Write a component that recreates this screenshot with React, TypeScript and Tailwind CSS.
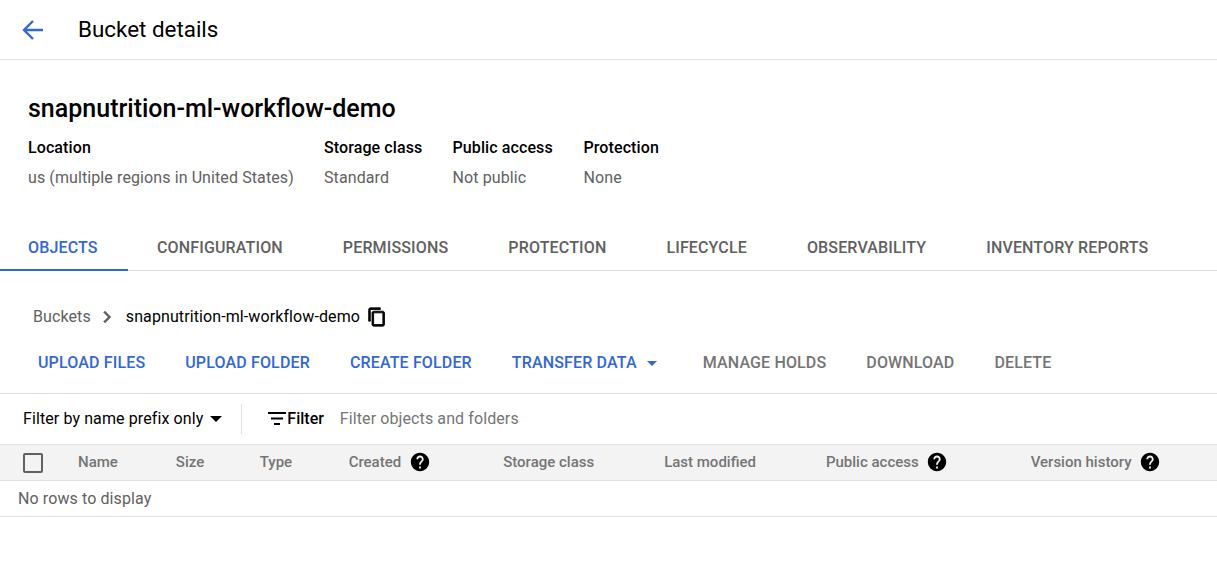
const tabs = ['CONFIGURATION', 'PERMISSIONS', 'PROTECTION', 'LIFECYCLE', 'OBSERVABILITY', 'INVENTORY REPORTS'];

function Help() {
  return (
    <svg width="22" height="22" viewBox="0 0 24 24" className="block shrink-0">
      <path fill="#000" d="M12 2C6.48 2 2 6.48 2 12s4.48 10 10 10 10-4.48 10-10S17.52 2 12 2zm1 17h-2v-2h2v2zm2.07-7.75l-.9.92C13.45 12.9 13 13.5 13 15h-2v-.5c0-1.1.45-2.1 1.17-2.83l1.24-1.26c.37-.36.59-.86.59-1.41 0-1.1-.9-2-2-2s-2 .9-2 2H8c0-2.21 1.79-4 4-4s4 1.79 4 4c0 .88-.36 1.68-.93 2.25z" />
    </svg>
  );
}

function Meta({ label, value, className }: { label: string; value: string; className: string }) {
  return (
    <div className={className}>
      <div className="text-black font-medium">{label}</div>
      <div className="mt-[10px] text-[#616161]">{value}</div>
    </div>
  );
}

export default function App() {
  return (
    <div className="w-[1217px] h-[582px] overflow-hidden bg-white text-[16px] leading-[20px] tracking-[0.1px] font-['Roboto',sans-serif]">
      <header className="h-[60px] flex items-center border-b border-[#e0e0e0]">
        <svg width="22" height="22" viewBox="0 0 22 22" className="ml-[22px]">
          <path d="M21 11H2.5M11 2l-9 9 9 9" fill="none" stroke="#3367d6" strokeWidth="2.4" />
        </svg>
        <h1 className="ml-[34px] pb-[2px] text-[22.4px] tracking-normal text-black">Bucket details</h1>
      </header>

      <h2 className="pl-[28px] pt-[34px] text-[25px] leading-[30px] tracking-normal font-medium text-black">snapnutrition-ml-workflow-demo</h2>

      <div className="flex pl-[28px] pt-[14px]">
        <Meta label="Location" value="us (multiple regions in United States)" className="w-[296px]" />
        <Meta label="Storage class" value="Standard" className="w-[128.5px]" />
        <Meta label="Public access" value="Not public" className="w-[131px]" />
        <Meta label="Protection" value="None" className="w-[100px]" />
      </div>

      <nav className="mt-[35px] h-[48px] flex border-b border-[#dadce0] font-medium tracking-[0.15px] pt-[2px]">
        <div className="w-[128px] -mr-px -mt-[2px] pt-[4px] pl-[28px] flex items-center text-[#3367d6] border-b-2 border-[#3367d6] h-[48px]">OBJECTS</div>
        {tabs.map((t) => (
          <div key={t} className="px-[30px] flex items-center text-[#616161] whitespace-nowrap">{t}</div>
        ))}
      </nav>

      <div className="flex items-center pl-[33px] pt-[37px] h-[55px]">
        <span className="text-[#616161]">Buckets</span>
        <svg width="24" height="24" viewBox="0 0 24 24" className="ml-[4px]">
          <path fill="#5f6368" stroke="#5f6368" strokeWidth="0.5" d="M10 6L8.59 7.41 13.17 12l-4.58 4.59L10 18l6-6z" />
        </svg>
        <span className="ml-[7px] text-black">snapnutrition-ml-workflow-demo</span>
        <svg width="20" height="20" viewBox="0 0 24 24" className="ml-[7px]">
          <path fill="#000" stroke="#000" strokeWidth="1" d="M16 1H4c-1.1 0-2 .9-2 2v14h2V3h12V1zm3 4H8c-1.1 0-2 .9-2 2v14c0 1.1.9 2 2 2h11c1.1 0 2-.9 2-2V7c0-1.1-.9-2-2-2zm0 16H8V7h11v14z" />
        </svg>
      </div>

      <div className="flex items-center h-[68px] pt-[7px] border-b border-[#e0e0e0] pl-[38px] font-medium tracking-[0.15px] whitespace-nowrap">
        <span className="text-[#3367d6]">UPLOAD FILES</span>
        <span className="ml-[40px] text-[#3367d6]">UPLOAD FOLDER</span>
        <span className="ml-[40px] text-[#3367d6]">CREATE FOLDER</span>
        <span className="ml-[40px] text-[#3367d6]">TRANSFER DATA</span>
        <span className="ml-[10px] w-0 h-0 border-x-[5px] border-x-transparent border-t-[5px] border-t-[#3367d6]" />
        <span className="ml-[46px] text-[#757575]">MANAGE HOLDS</span>
        <span className="ml-[40px] text-[#757575]">DOWNLOAD</span>
        <span className="ml-[40px] text-[#757575]">DELETE</span>
      </div>

      <div className="flex items-center h-[50px] pl-[23px]">
        <span className="text-black">Filter by name prefix only</span>
        <span className="ml-[7px] w-0 h-0 border-x-[6px] border-x-transparent border-t-[6px] border-t-black" />
        <span className="ml-[19px] w-px h-[30px] bg-[#e0e0e0]" />
        <svg width="18" height="14" viewBox="0 0 18 14" className="ml-[26px]">
          <path fill="#000" d="M0 0h18v2H0zM3 5.5h12v2H3zM6 11h6v2H6z" />
        </svg>
        <span className="ml-px font-medium tracking-normal text-black">Filter</span>
        <span className="ml-[16px] text-[#757575]">Filter objects and folders</span>
      </div>

      <div className="flex items-center h-[37px] pb-[2px] bg-[#f3f3f3] border-y border-[#e0e0e0] text-[15px] tracking-normal font-medium text-[#757575] whitespace-nowrap">
        <span className="ml-[23px] mt-[2px] w-[20px] h-[20px] border-2 border-[#616161] rounded-[2px]" />
        <span className="ml-[35px]">Name</span>
        <span className="ml-[58px]">Size</span>
        <span className="ml-[55.5px]">Type</span>
        <span className="ml-[56.5px]">Created</span>
        <span className="ml-[8px]"><Help /></span>
        <span className="ml-[72px]">Storage class</span>
        <span className="ml-[70px]">Last modified</span>
        <span className="ml-[70px]">Public access</span>
        <span className="ml-[7px]"><Help /></span>
        <span className="ml-[83px]">Version history</span>
        <span className="ml-[7px]"><Help /></span>
      </div>

      <div className="h-[36px] flex items-center pl-[18px] border-b border-[#e0e0e0] text-[#616161]">No rows to display</div>
    </div>
  );
}
